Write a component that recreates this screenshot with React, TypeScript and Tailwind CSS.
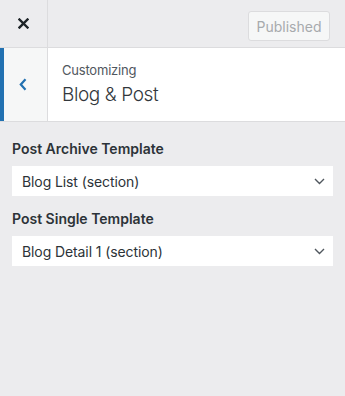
const font = { fontFamily: 'Inter, "Liberation Sans", sans-serif' };

const Chevron = () => (
  <svg width="11" height="7" viewBox="0 0 11 7">
    <path d="M1 1 L5.5 5.5 L10 1" fill="none" stroke="#50575e" strokeWidth="1.4" />
  </svg>
);

const Field = ({ label, value }: { label: string; value: string }) => (
  <div className="flex flex-col">
    <div className="h-5 text-[14px] leading-5 font-semibold text-[#2c3338]">{label}</div>
    <div className="mt-[7px] h-[30px] bg-white flex items-center justify-between pl-[10px] pr-[8px]">
      <span className="text-[14px] tracking-[-0.1px] text-[#2c3338]">{value}</span>
      <Chevron />
    </div>
  </div>
);

const App = () => {
  return (
    <div className="w-[345px] h-[396px] bg-[#ececee] flex flex-col overflow-hidden" style={font}>
      {/* top bar */}
      <div className="h-12 flex border-b border-[#dcdcde] shrink-0">
        <div className="w-12 flex items-center justify-center border-r border-[#dcdcde]">
          <svg width="11" height="11" viewBox="0 0 11 11">
            <path d="M1.5 1.5 L9.5 9.5 M9.5 1.5 L1.5 9.5" stroke="#1d2327" strokeWidth="2.4" strokeLinecap="square" />
          </svg>
        </div>
        <div className="flex-1 flex items-start justify-end pr-[15px] pt-[11px]">
          <button className="h-[30px] w-[82px] rounded-[3px] border border-[#dcdcde] bg-[#f6f7f7] text-[14px] text-[#a7aaad]">
            Published
          </button>
        </div>
      </div>

      {/* section header */}
      <div className="h-[74px] flex bg-white border-b border-[#dcdcde] shrink-0">
        <div className="w-12 flex items-center justify-center bg-[#f6f7f7] border-l-4 border-l-[#2271b1] border-r border-r-[#dcdcde]">
          <svg width="8" height="13" viewBox="0 0 8 13" className="-ml-[5px]">
            <path d="M6.5 1.2 L1.8 6.5 L6.5 11.8" fill="none" stroke="#2271b1" strokeWidth="2.2" />
          </svg>
        </div>
        <div className="flex flex-col justify-center pl-[14px] pt-[2px]">
          <div className="text-[13px] leading-4 tracking-[-0.2px] text-[#50575e]">Customizing</div>
          <div className="text-[19px] leading-7 mt-[3px] font-light tracking-[-0.4px] text-[#32373c]">Blog &amp; Post</div>
        </div>
      </div>

      {/* controls */}
      <div className="flex flex-col gap-[13px] px-3 pt-[17px]">
        <Field label="Post Archive Template" value="Blog List (section)" />
        <Field label="Post Single Template" value="Blog Detail 1 (section)" />
      </div>
    </div>
  );
};

export default App;
